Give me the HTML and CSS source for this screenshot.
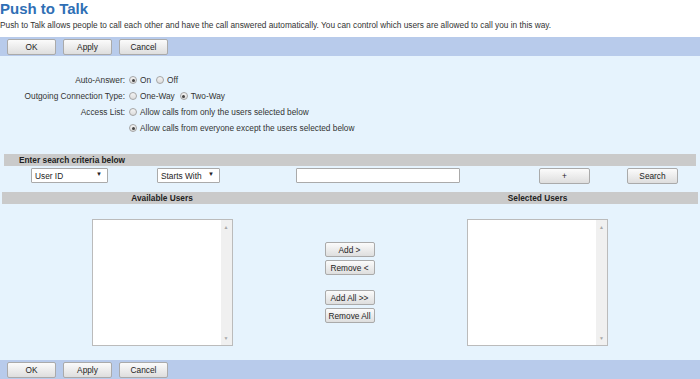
FILE: index.html
```html
<!DOCTYPE html>
<html lang="en">
<head>
    <meta charset="UTF-8">
    <title>Push to Talk</title>
    <link rel="stylesheet" href="styles.css">
</head>
<body>
<h1 class="page-title">Push to Talk</h1>
<p class="page-desc">Push to Talk allows people to call each other and have the call answered automatically. You can control which users are allowed to call you in this way.</p>

<form class="settings" onsubmit="return false">
    <div class="button-bar">
        <button class="btn bar-btn">OK</button>
        <button class="btn bar-btn">Apply</button>
        <button class="btn bar-btn">Cancel</button>
    </div>

    <div class="content">
        <div class="form-rows">
            <div class="label">Auto-Answer:</div>
            <div class="controls">
                <label><input type="radio" name="auto" checked>On</label>
                <label><input type="radio" name="auto">Off</label>
            </div>

            <div class="label">Outgoing Connection Type:</div>
            <div class="controls">
                <label><input type="radio" name="conn">One-Way</label>
                <label><input type="radio" name="conn" checked>Two-Way</label>
            </div>

            <div class="label">Access List:</div>
            <div class="controls">
                <label><input type="radio" name="access">Allow calls from only the users selected below</label>
            </div>

            <div class="label"></div>
            <div class="controls">
                <label><input type="radio" name="access" checked>Allow calls from everyone except the users selected below</label>
            </div>
        </div>

        <div class="section-bar search-bar">Enter search criteria below</div>
        <div class="search-row">
            <span class="select-wrap select-field">
                <select>
                    <option>User ID</option>
                    <option>Last Name</option>
                    <option>First Name</option>
                </select>
            </span>
            <span class="select-wrap select-mode">
                <select>
                    <option>Starts With</option>
                    <option>Contains</option>
                    <option>Equal To</option>
                </select>
            </span>
            <input type="text" class="search-input">
            <button class="btn search-btn">+</button>
            <button class="btn search-btn">Search</button>
        </div>

        <div class="users">
            <div class="section-bar users-head">
                <div>Available Users</div>
                <div></div>
                <div>Selected Users</div>
            </div>
            <div class="users-body">
                <div class="list-col">
                    <div class="list-box">
                        <div class="list-items"></div>
                        <div class="list-scroll">
                            <span>&#9650;</span>
                            <span>&#9660;</span>
                        </div>
                    </div>
                </div>
                <div class="move-col">
                    <button class="btn move-btn">Add &gt;</button>
                    <button class="btn move-btn">Remove &lt;</button>
                    <button class="btn move-btn gap-top">Add All &gt;&gt;</button>
                    <button class="btn move-btn">Remove All</button>
                </div>
                <div class="list-col">
                    <div class="list-box">
                        <div class="list-items"></div>
                        <div class="list-scroll">
                            <span>&#9650;</span>
                            <span>&#9660;</span>
                        </div>
                    </div>
                </div>
            </div>
        </div>
    </div>

    <div class="button-bar">
        <button class="btn bar-btn">OK</button>
        <button class="btn bar-btn">Apply</button>
        <button class="btn bar-btn">Cancel</button>
    </div>
</form>
</body>
</html>
```

FILE: styles.css
```css
body {
    margin: 0;
    font-family: "Liberation Sans", Arial, sans-serif;
    font-size: 8.3px;
    color: #333;
    background-color: #fff;
}

.page-title {
    margin: 0;
    font-size: 15px;
    line-height: 18px;
    color: #2f6fb5;
}

.page-desc {
    margin: 2px 0 7px;
    line-height: 10px;
    color: #333;
}

.settings {
    margin: 0;
}

.button-bar {
    display: flex;
    gap: 7px;
    height: 19px;
    padding: 2px 7px 0;
    box-sizing: border-box;
    background-color: #b8cbeb;
}

.btn {
    font-family: inherit;
    font-size: 8.3px;
    color: #222;
    padding: 0;
    background: linear-gradient(#fbfbfb, #dedede);
    border: 1px solid #aaa;
    border-radius: 2px;
    cursor: pointer;
}

.bar-btn {
    width: 49px;
    height: 16px;
}

.content {
    background-color: #e6f3fd;
    padding: 16px 0 14px;
}

/* settings rows */
.form-rows {
    display: grid;
    grid-template-columns: 125px 1fr;
    grid-auto-rows: 16px;
    column-gap: 4px;
    align-items: center;
}

.label {
    text-align: right;
    color: #333;
}

.controls {
    display: flex;
    align-items: center;
    gap: 5px;
}

.controls label {
    display: flex;
    align-items: center;
}

.controls input[type="radio"] {
    appearance: none;
    width: 8px;
    height: 8px;
    margin: 0 3px 0 0;
    border: 1px solid #a5a5a5;
    border-radius: 50%;
    background: linear-gradient(#f4f4f4, #dcdcdc);
    box-sizing: border-box;
    position: relative;
}

.controls input[type="radio"]:checked::after {
    content: "";
    position: absolute;
    left: 1.5px;
    top: 1.5px;
    width: 3px;
    height: 3px;
    border-radius: 50%;
    background-color: #444;
}

/* gray header bars */
.section-bar {
    background-color: #cacaca;
    font-weight: bold;
    line-height: 12px;
    height: 12px;
    color: #222;
}

.search-bar {
    margin: 18px 4px 0;
    padding-left: 15px;
}

.search-row {
    display: grid;
    grid-template-columns: 126px 139px 243px 88px 51px;
    align-items: start;
    margin-top: 2px;
    padding-left: 31px;
    height: 15px;
}

.select-wrap {
    position: relative;
    display: block;
}

.select-wrap select {
    appearance: none;
    width: 100%;
    height: 15px;
    padding: 0 0 0 3px;
    font-family: inherit;
    font-size: 8.3px;
    color: #222;
    background-color: #fff;
    border: 1px solid #aaa;
    border-radius: 1px;
}

.select-wrap::after {
    content: "\25BC";
    position: absolute;
    right: 6px;
    top: 3px;
    font-size: 6px;
    color: #222;
    pointer-events: none;
}

.select-field {
    width: 77px;
}

.select-mode {
    width: 63px;
}

.search-input {
    width: 164px;
    height: 15px;
    padding: 0;
    box-sizing: border-box;
    border: 1px solid #aaa;
    border-radius: 1px;
    background-color: #fff;
}

.search-btn {
    width: 51px;
    height: 16px;
}

/* available / selected users */
.users {
    margin: 9px 2px 0;
}

.users-head,
.users-body {
    display: grid;
    grid-template-columns: 320px 55px 1fr;
}

.users-head {
    text-align: center;
}

.users-body {
    margin-top: 15px;
}

.list-col {
    display: flex;
    justify-content: center;
}

.list-box {
    display: flex;
    width: 141px;
    height: 127px;
    box-sizing: border-box;
    border: 1px solid #bbb;
    background-color: #fff;
}

.list-items {
    flex: 1;
}

.list-scroll {
    width: 11px;
    background-color: #f0f0f0;
    display: flex;
    flex-direction: column;
    justify-content: space-between;
    align-items: center;
    padding: 4px 0;
    font-size: 5px;
    color: #a8a8a8;
}

.move-col {
    display: flex;
    flex-direction: column;
    align-items: center;
    gap: 3px;
    padding-top: 23px;
}

.move-btn {
    width: 50px;
    height: 15px;
}

.move-btn.gap-top {
    margin-top: 12px;
}
```
